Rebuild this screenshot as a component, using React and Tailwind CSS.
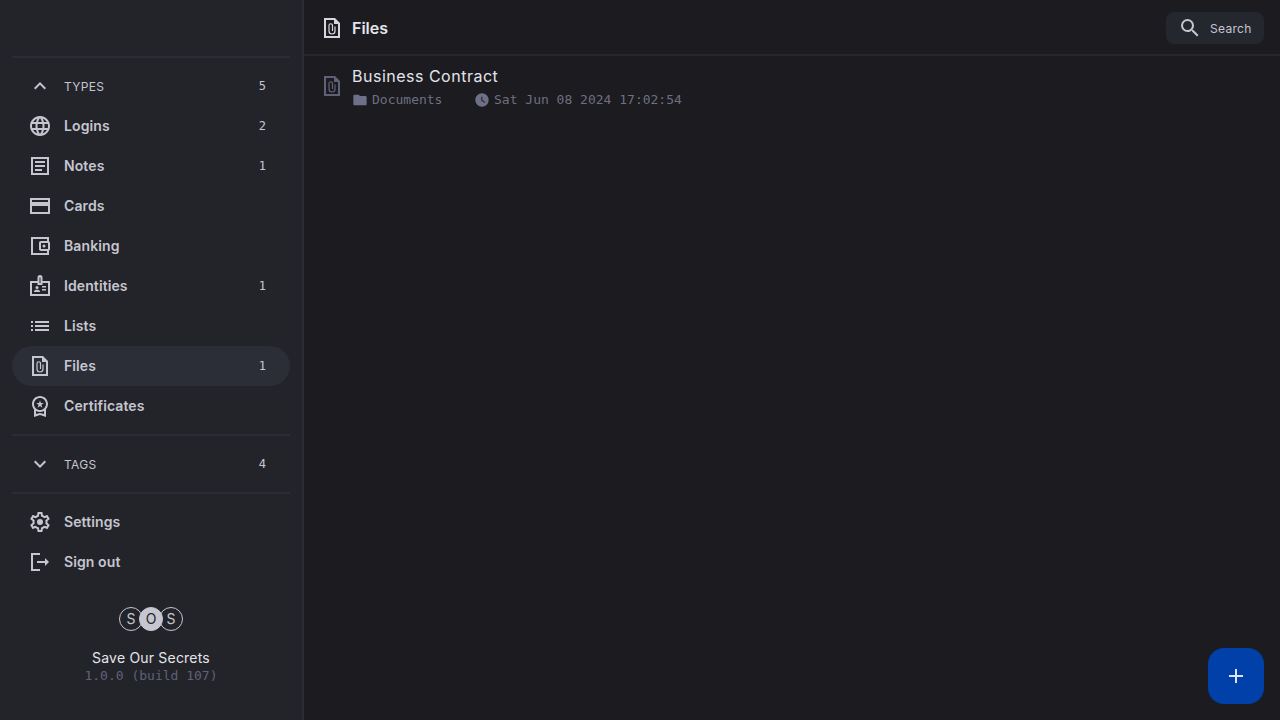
import {
    MdAdd,
    MdExpandLess,
    MdExpandMore,
    MdFolder,
    MdLanguage,
    MdList,
    MdOutlineWorkspacePremium,
    MdSearch,
    MdWatchLater,
} from 'react-icons/md';

function Svg({ size = 24, className, children }) {
    return (
        <svg width={size} height={size} viewBox="0 0 24 24" fill="currentColor" className={className}>
            {children}
        </svg>
    );
}

const NoteIcon = (props) => (
    <Svg {...props}>
        <path d="M19 5v14H5V5h14m2-2H3v18h18V3zM14 17H7v-2h7v2zm3-4H7v-2h10v2zm0-4H7V7h10v2z" />
    </Svg>
);

const CardIcon = (props) => (
    <Svg {...props}>
        <path d="M22 4H2v16h20V4zm-2 14H4v-6h16v6zm0-10H4V6h16v2z" />
    </Svg>
);

const WalletIcon = (props) => (
    <Svg {...props}>
        <path d="M21 7.28V3H3v18h18v-4.28c.59-.35 1-.98 1-1.72V9c0-.74-.41-1.38-1-1.72zM20 9v6h-7V9h7zM5 19V5h14v2h-6c-1.1 0-2 .9-2 2v6c0 1.1.9 2 2 2h6v2H5z" />
        <circle cx="16" cy="12" r="1.5" />
    </Svg>
);

const BadgeIcon = (props) => (
    <Svg {...props}>
        <path d="M22 7h-7.5V3.5a2.5 2.5 0 0 0-5 0V7H2v15h20V7zM11.5 3.5h1V9h-1V3.5zM20 20H4V9h5.5v2h5V9H20v11zM18 13.5h-4V12h4zM18 16.5h-4V15h4z" />
        <circle cx="9" cy="13.5" r="1.5" />
        <path d="M11.08 16.18C10.44 15.9 9.74 15.75 9 15.75s-1.44.15-2.08.43C6.36 16.42 6 16.96 6 17.57V18h6v-.43c0-.61-.36-1.15-.92-1.39z" />
    </Svg>
);

const FileIcon = (props) => (
    <Svg {...props}>
        <path d="M15 2H4v20h16V7l-5-5zm3 18H6V4h8v4h4v12z" />
        <path d="M15 10.5V15a3 3 0 0 1-6 0V9.5a1.75 1.75 0 0 1 3.5 0V15" fill="none" stroke="currentColor" strokeWidth="1.2" />
    </Svg>
);

const GearIcon = (props) => (
    <Svg {...props}>
        <path d="M19.43 12.98c.04-.32.07-.64.07-.98 0-.34-.03-.66-.07-.98l2.11-1.65c.19-.15.24-.42.12-.64l-2-3.46c-.09-.16-.26-.25-.44-.25-.06 0-.12.01-.17.03l-2.49 1c-.52-.4-1.08-.73-1.69-.98l-.38-2.65C14.46 2.18 14.25 2 14 2h-4c-.25 0-.46.18-.49.42l-.38 2.65c-.61.25-1.17.59-1.69.98l-2.49-1c-.06-.02-.12-.03-.18-.03-.17 0-.34.09-.43.25l-2 3.46c-.13.22-.07.49.12.64l2.11 1.65c-.04.32-.07.65-.07.98 0 .33.03.66.07.98l-2.11 1.65c-.19.15-.24.42-.12.64l2 3.46c.09.16.26.25.44.25.06 0 .12-.01.17-.03l2.49-1c.52.4 1.08.73 1.69.98l.38 2.65c.03.24.24.42.49.42h4c.25 0 .46-.18.49-.42l.38-2.65c.61-.25 1.17-.59 1.69-.98l2.49 1c.06.02.12.03.18.03.17 0 .34-.09.43-.25l2-3.46c.12-.22.07-.49-.12-.64l-2.11-1.65zm-1.98-1.71c.04.31.05.52.05.73 0 .21-.02.43-.05.73l-.14 1.13.89.7 1.08.84-.7 1.21-1.27-.51-1.04-.42-.9.68c-.43.32-.84.56-1.25.73l-1.06.43-.16 1.13-.2 1.35h-1.4l-.19-1.35-.16-1.13-1.06-.43c-.43-.18-.83-.41-1.23-.71l-.91-.7-1.06.43-1.27.51-.7-1.21 1.08-.84.89-.7-.14-1.13c-.03-.31-.05-.54-.05-.74s.02-.43.05-.73l.14-1.13-.89-.7-1.08-.84.7-1.21 1.27.51 1.04.42.9-.68c.43-.32.84-.56 1.25-.73l1.06-.43.16-1.13.2-1.35h1.39l.19 1.35.16 1.13 1.06.43c.43.18.83.41 1.23.71l.91.7 1.06-.43 1.27-.51.7 1.21-1.07.85-.89.7.14 1.13z" />
        <circle cx="12" cy="12" r="3" />
    </Svg>
);

const LogoutIcon = (props) => (
    <Svg {...props}>
        <path d="M5 5h7V3H3v18h9v-2H5zM21 12l-4-4v3H9v2h8v3z" />
    </Svg>
);

const types = [
    { label: 'Logins', icon: MdLanguage, count: 2 },
    { label: 'Notes', icon: NoteIcon, count: 1 },
    { label: 'Cards', icon: CardIcon },
    { label: 'Banking', icon: WalletIcon },
    { label: 'Identities', icon: BadgeIcon, count: 1 },
    { label: 'Lists', icon: MdList },
    { label: 'Files', icon: FileIcon, count: 1, active: true },
    { label: 'Certificates', icon: MdOutlineWorkspacePremium },
];

const sans = "font-['Inter',sans-serif]";
const mono = "font-['DejaVu_Sans_Mono','Liberation_Mono',monospace]";

function Divider() {
    return <div className="h-[2px] mx-3 w-[278px] bg-[#2b2c35]" />;
}

function Row({ icon: Icon, label, count, active, heading }) {
    return (
        <div className={`h-10 w-[278px] mx-3 pl-4 pr-6 flex items-center rounded-full ${active ? 'bg-[#2b2d37]' : ''}`}>
            <Icon size={24} className="text-[#c6c6d0] shrink-0" />
            <span className={`ml-3 flex-1 text-[#c6c6d0] ${heading ? 'pt-px text-xs tracking-[0.3px]' : 'text-sm font-semibold tracking-[0.1px]'}`}>{label}</span>
            {count !== undefined && <span className={`${mono} text-xs text-[#c6c6d0]`}>{count}</span>}
        </div>
    );
}

function Logo() {
    return (
        <div className="flex justify-center">
            {['S', 'O', 'S'].map((letter, i) => (
                <span
                    key={i}
                    className={`w-6 h-6 rounded-full border border-[#c6c6d0] flex items-center justify-center text-sm ${i === 1 ? 'bg-[#c6c6d0] text-[#23242a] -mx-1 z-10' : 'text-[#c6c6d0]'}`}
                >
                    {letter}
                </span>
            ))}
        </div>
    );
}

export default function App() {
    return (
        <div className={`${sans} relative h-[720px] w-[1280px] overflow-hidden flex bg-[#1b1b20]`}>
            <aside className="w-[304px] h-full shrink-0 bg-[#23242a] border-r-2 border-[#2b2c35] flex flex-col">
                <div className="h-14 shrink-0" />
                <Divider />
                <div className="py-2">
                    <Row icon={MdExpandLess} label="TYPES" count={5} heading />
                    {types.map((t) => (
                        <Row key={t.label} {...t} />
                    ))}
                </div>
                <Divider />
                <div className="py-2">
                    <Row icon={MdExpandMore} label="TAGS" count={4} heading />
                </div>
                <Divider />
                <div className="pt-2">
                    <Row icon={GearIcon} label="Settings" />
                    <Row icon={LogoutIcon} label="Sign out" />
                </div>
                <div className="mt-[25px] w-[302px] text-center">
                    <Logo />
                    <div className="mt-[17px] text-sm leading-[20px] tracking-[0.2px] text-[#e4e4ec]">Save Our Secrets</div>
                    <div className={`${mono} text-[13px] leading-4 text-[#5f6178]`}>1.0.0 (build 107)</div>
                </div>
            </aside>
            <main className="flex-1 flex flex-col">
                <header className="h-14 shrink-0 border-b-2 border-[#25272d] pt-[2px] px-4 flex items-center">
                    <FileIcon size={24} className="text-[#d6d6e0]" />
                    <h1 className="ml-2 flex-1 text-base font-semibold text-[#e4e4ec]">Files</h1>
                    <button className="w-[98px] h-8 rounded-lg bg-[#25272f] pl-[12px] flex items-center text-[#c6c6d0]">
                        <MdSearch size={24} />
                        <span className="ml-2 pt-px text-xs tracking-[0.3px]">Search</span>
                    </button>
                </header>
                <div className="pl-4 pt-2 flex items-start">
                    <FileIcon size={24} className="mt-[10px] text-[#5f6178]" />
                    <div className="ml-2">
                        <div className="text-base leading-6 tracking-[0.5px] text-[#e4e4ec]">Business Contract</div>
                        <div className={`${mono} mt-[2px] text-[13px] text-[#6e6f80] flex items-center h-5`}>
                            <MdFolder size={16} className="text-[#6e7088]" />
                            <span className="ml-1 w-[102px]">Documents</span>
                            <MdWatchLater size={16} className="text-[#6e7088]" />
                            <span className="ml-1">Sat Jun 08 2024 17:02:54</span>
                        </div>
                    </div>
                </div>
            </main>
            <button className="absolute right-4 bottom-4 w-14 h-14 rounded-2xl bg-[#0040a8] flex items-center justify-center text-[#dbe4ff]">
                <MdAdd size={24} />
            </button>
        </div>
    );
}
